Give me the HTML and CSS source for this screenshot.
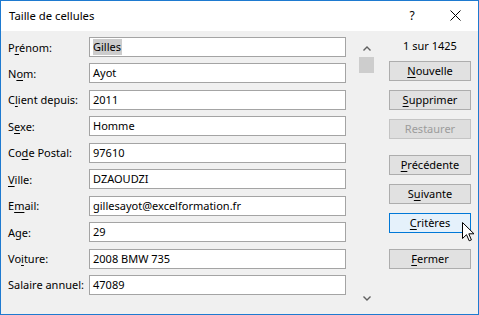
FILE: index.html
```html
<!DOCTYPE html>
<html lang="fr">
<head>
<meta charset="utf-8">
<title>Taille de cellules</title>
<link rel="stylesheet" href="styles.css">
</head>
<body>
<div class="window">
  <div class="titlebar">
    <span class="title">Taille de cellules</span>
    <span class="help">?</span>
    <svg class="close" width="11" height="11" viewBox="0 0 11 11"><path d="M0.5 0.5 L10.5 10.5 M10.5 0.5 L0.5 10.5" stroke="#000" stroke-width="1" fill="none"/></svg>
  </div>
  <div class="content">
    <div class="form">
      <div class="row"><label>P<u>r</u>énom:</label><div class="field"><span class="sel">Gilles</span></div></div>
      <div class="row"><label>N<u>o</u>m:</label><div class="field">Ayot</div></div>
      <div class="row"><label>C<u>l</u>ient depuis:</label><div class="field">2011</div></div>
      <div class="row"><label>S<u>e</u>xe:</label><div class="field">Homme</div></div>
      <div class="row"><label>Co<u>d</u>e Postal:</label><div class="field">97610</div></div>
      <div class="row"><label><u>V</u>ille:</label><div class="field">DZAOUDZI</div></div>
      <div class="row"><label>E<u>m</u>ail:</label><div class="field">gillesayot@excelformation.fr</div></div>
      <div class="row"><label>Age:</label><div class="field">29</div></div>
      <div class="row"><label>Vo<u>i</u>ture:</label><div class="field">2008 BMW 735</div></div>
      <div class="row"><label>Salaire annuel:</label><div class="field">47089</div></div>
    </div>
    <div class="scrollbar">
      <svg width="8" height="5" viewBox="0 0 8 5"><path d="M0.5 4.5 L4 1 L7.5 4.5" stroke="#606060" stroke-width="1.4" fill="none"/></svg>
      <div class="thumb"></div>
      <div class="track"></div>
      <svg width="8" height="5" viewBox="0 0 8 5"><path d="M0.5 0.5 L4 4 L7.5 0.5" stroke="#606060" stroke-width="1.4" fill="none"/></svg>
    </div>
    <div class="buttons">
      <div class="counter">1 sur 1425</div>
      <div class="group">
        <button class="btn"><u>N</u>ouvelle</button>
        <button class="btn"><u>S</u>upprimer</button>
        <button class="btn disabled">Restaurer</button>
      </div>
      <div class="group">
        <button class="btn"><u>P</u>récédente</button>
        <button class="btn">S<u>u</u>ivante</button>
        <button class="btn hover"><u>C</u>ritères</button>
      </div>
      <div class="group">
        <button class="btn"><u>F</u>ermer</button>
      </div>
    </div>
  </div>
  <svg class="cursor" width="13" height="20" viewBox="0 0 13 20"><path d="M0.5 0.5 L0.5 16.5 L4.5 12.7 L7.2 18.8 L9.4 17.9 L6.8 11.8 L12 11.8 Z" fill="#fff" stroke="#000" stroke-width="1" stroke-linejoin="miter"/></svg>
</div>
</body>
</html>
```

FILE: styles.css
```css
* { box-sizing: border-box; }
html, body { margin: 0; padding: 0; background: #f0f0f0; }
body {
  font-family: "Noto Sans", "Open Sans", sans-serif;
  font-size: 11px;
  color: #000;
}
.window {
  position: relative;
  width: 479px;
  height: 315px;
  border: 1px solid #1e7ad0;
  background: #f0f0f0;
  display: flex;
  flex-direction: column;
}
.titlebar {
  height: 30px;
  background: #fff;
  display: flex;
  align-items: center;
  padding-left: 8px;
  padding-bottom: 2px;
}
.title { flex: 1; font-size: 11.3px; }
.help { width: 16px; margin-right: 30px; text-align: center; font-size: 12px; }
.close { margin-right: 17px; }
.content {
  flex: 1;
  display: flex;
  padding: 6px 6px 0 7px;
}
.form {
  display: flex;
  flex-direction: column;
  gap: 6.45px;
  width: 338px;
}
.row {
  display: flex;
  align-items: center;
  height: 20px;
}
.row label { width: 81px; white-space: nowrap; }
.field {
  width: 257px;
  height: 20px;
  background: #fff;
  border: 1px solid #a4a4a4;
  padding: 0 3px;
  line-height: 17px;
  white-space: nowrap;
}
.sel { background: #cccccc; padding: 0 1px 1px 0; }
u { text-decoration-thickness: 1px; text-underline-offset: 2px; }
.scrollbar {
  margin-left: 12px;
  width: 17px;
  height: 268px;
  display: flex;
  flex-direction: column;
  align-items: center;
  padding-top: 9px;
}
.thumb {
  margin-top: 6px;
  width: 15px;
  height: 16px;
  background: #cdcdcd;
}
.track { flex: 1; }
.scrollbar svg:last-child { margin-bottom: 4px; }
.buttons {
  margin-left: 14px;
  width: 82px;
  display: flex;
  flex-direction: column;
  gap: 16px;
}
.counter {
  text-align: center;
  height: 16px;
  line-height: 16px;
  margin-top: 1px;
  margin-bottom: -9px;
}
.group { display: flex; flex-direction: column; gap: 9px; }
.btn {
  font: inherit;
  color: #000;
  width: 82px;
  height: 20px;
  padding: 0;
  background: #e1e1e1;
  border: 1px solid #adadad;
  line-height: 16px;
}
.btn.disabled {
  color: #9c9c9c;
  border-color: #c4c4c4;
  background: #dedede;
}
.btn.hover {
  background: #e5f1fb;
  border-color: #0078d7;
}
.cursor {
  position: absolute;
  left: 461px;
  top: 221px;
}
```
